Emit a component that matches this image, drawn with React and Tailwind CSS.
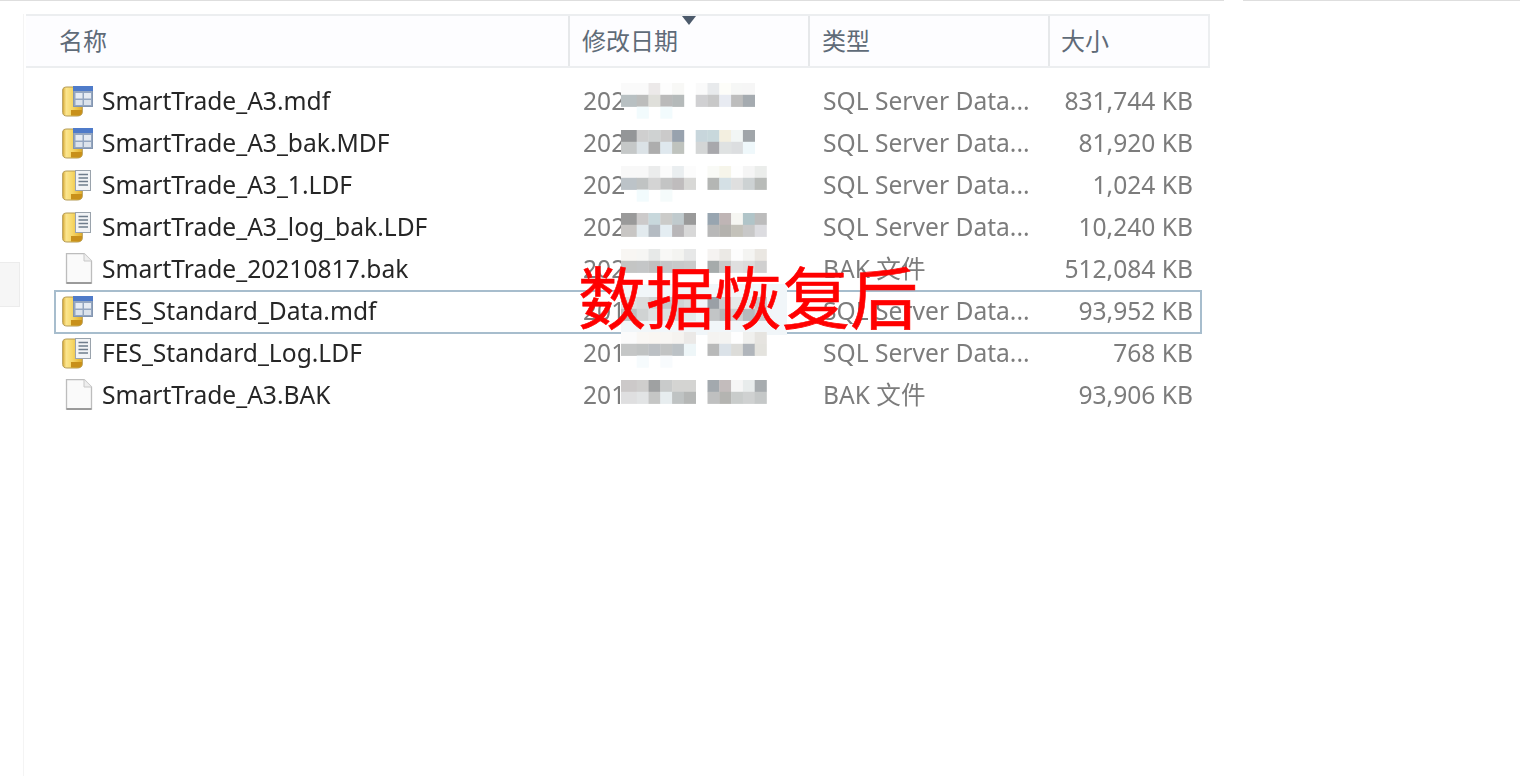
import React from "react";

const FONT = { fontFamily: '"Noto Sans", "Noto Sans CJK SC", sans-serif' };

const c = (s) => s.split(" ");
const mosaics = [
  { top: 83, rows: [c("fafafa fafafa ece9e9 fdfdfd f8f8f6 x fafafa e8eaec fdfdf9 f6f7f6 f6f6f6"), c("b8c0c2 bcbdbc dfdfda bababa b5baba x d0d0d2 c8c8c8 e8ebf2 bdbdbd a5abb0"), c("x f2fbfd x f2fbfd")] },
  { top: 130, rows: [c("949698 cfcfcf cfd2d2 cbcaca 98a2ae x c8d6dc c8d8dc f3efe0 f2f6f5 a0a5a9"), c("c5c8c8 dbe2e6 adadad dfe8ee bfc3be x d4d6d6 a8a8ac dfe2e2 dcdee0 eff8fb")] },
  { top: 166, rows: [c("f8f8f8 f8f8f8 ebecec fbfbfb eaeef0 fcfcfc x f9faf6 f6f5ea fefefe f5f5f5 ebedeb"), c("bcc3c8 c0c3c3 d4d4d4 c3c4c4 bfbcbd d8d8d6 x b4b6b4 d4e0e5 dfdfdf cdd2d3 b8bbb8"), c("x f2fbfd x f5fbfb")] },
  { top: 213, rows: [c("9a9a9a cccaca c8d8dc cbcbc9 c0cacd 9a9a9a x 98a5b0 bfb5b5 f6f6f2 b0c4c8 bcbcbc"), c("c8c6c4 e2eaee b4bbc2 e4edf2 b8b6b8 d8d8d8 x b8b8b8 b4b2ae c4c2ba c8c8c8 dcdce0")] },
  { top: 249, rows: [c("f8f6f3 f6f6f4 e7e9e8 f8f8f6 f4f4f1 e7e8e8 x f5f3f1 ebe9e5 fdfdfd f4f4f2 eae7e2"), c("c4c5c4 c4c6c7 c0c0c0 c5c6c8 c7c9c9 cacbca x a6abab c8c8c8 dfdfdf dbdbdb d0d0d0")] },
  { top: 297, rows: [c("dfe1e1 d9dbdb d0d2d2 c4c7c9 d0d2d4 d8dadb x 9aa0a6 c9cccd e6e8e8 e8ebec c5c8ca"), c("bcbfbf d0d3d3 dde1e1 dbdfe0 cfd3d5 e5eaec x c2c5c6 b4b7b8 cdd0d1 b5b9bc c8cbcc")] },
  { top: 332, rows: [c("fbfbfb f9f7f4 f9f6f2 f8f6f3 f5f3f0 ebe9e7 x f4f3f1 f4f4f2 fefefe f0f0ee e6e4e0"), c("c4c6c6 c0c3c3 bcc0c4 c2c4c4 bcc2c6 eef6f8 x b8b9b9 dbe2e8 dcdcd9 b0b5bb e4e3de"), c("x f6fbfd x f8fbfd")] },
  { top: 380, rows: [c("ccc9c9 cfcecd 9fa1a2 c9cbcb d4d4d2 d4d4d2 x a3a9ae c3bcbc f6f6f6 e8ecec a7acaf"), c("dfdfe0 e2e4e5 c5c6c5 e7edef bfc3c3 b5b7b6 x bfc0c0 b4b4b1 c9cccb cfd1d1 c5c8c8")] },
];

function Mosaic({ m }) {
  const cell = 11.8;
  const first = 15.7;
  return (
    <svg
      width="160"
      height="40"
      viewBox="0 0 160 40"
      className="absolute left-[621px] blur-[0.5px]"
      style={{ top: m.top }}
      aria-hidden="true"
    >
      {m.rows.map((row, y) =>
        row.map((col, x) => {
          if (col === "x") return null;
          const px = x === 0 ? 0 : first + (x - 1) * cell;
          return (
            <rect
              key={x + "-" + y}
              x={px}
              y={y * cell}
              width={(x === 0 ? first : cell) + 0.3}
              height={cell + 0.3}
              fill={"#" + col}
            />
          );
        })
      )}
    </svg>
  );
}

function Cylinder({ id }) {
  return (
    <>
      <defs>
        <linearGradient id={id} x1="0" x2="1" y1="0" y2="0">
          <stop offset="0" stopColor="#d9aa32" />
          <stop offset="0.18" stopColor="#fbe58f" />
          <stop offset="0.5" stopColor="#f6d766" />
          <stop offset="1" stopColor="#e0ac2a" />
        </linearGradient>
      </defs>
      <path
        d="M0.7 5 C0.7 2.5 3 2 5 2 H16 C19 2 20.3 3 20.3 5 V27 C20.3 30 18 31 15 31 H5 C2.5 31 0.7 30 0.7 27.5 Z"
        fill={`url(#${id})`}
        stroke="#b39a55"
      />
      <path d="M9 25 H20 V27 C20 29.5 18 30.6 15 30.6 H9 Z" fill="#c8901a" />
    </>
  );
}

function MdfIcon({ id }) {
  return (
    <svg width="32" height="32" viewBox="0 0 32 32" className="shrink-0" aria-hidden="true">
      <Cylinder id={id} />
      <rect x="11.5" y="1.5" width="19" height="20" fill="#94a6c0" stroke="#8496b0" />
      <rect x="11" y="1" width="20" height="5" fill="#4f7bc9" />
      <rect x="13.5" y="8" width="7" height="5.5" fill="#e6ebf2" />
      <rect x="22" y="8" width="7" height="5.5" fill="#e6ebf2" />
      <rect x="13.5" y="15" width="7" height="5" fill="#dce3ec" />
      <rect x="22" y="15" width="7" height="5" fill="#dce3ec" />
    </svg>
  );
}

function LdfIcon({ id }) {
  return (
    <svg width="32" height="32" viewBox="0 0 32 32" className="shrink-0" aria-hidden="true">
      <Cylinder id={id} />
      <rect x="13.5" y="1.5" width="15" height="20" fill="#f2f4f6" stroke="#9aa3ac" />
      <path d="M16.5 5.5 H26 M16.5 9 H26 M16.5 12.5 H26 M16.5 16 H26" stroke="#6f7d8c" strokeWidth="1.6" />
    </svg>
  );
}

function BlankIcon() {
  return (
    <svg width="32" height="32" viewBox="0 0 32 32" className="shrink-0" aria-hidden="true">
      <path d="M4.5 0.5 H22 L29.5 8 V30 H4.5 Z" fill="#fafafa" stroke="#bdbdbd" strokeWidth="1.3" />
      <path d="M22 0.5 V8 H29.5" fill="#eeeeee" stroke="#c8c8c8" />
      <path d="M4.5 30 H29.5" stroke="#8f8f8f" strokeWidth="1.6" />
    </svg>
  );
}

const files = [
  ["SmartTrade_A3.mdf", "202", "SQL Server Data...", "831,744 KB", "m"],
  ["SmartTrade_A3_bak.MDF", "202", "SQL Server Data...", "81,920 KB", "m"],
  ["SmartTrade_A3_1.LDF", "202", "SQL Server Data...", "1,024 KB", "l"],
  ["SmartTrade_A3_log_bak.LDF", "202", "SQL Server Data...", "10,240 KB", "l"],
  ["SmartTrade_20210817.bak", "202", "BAK 文件", "512,084 KB", "b"],
  ["FES_Standard_Data.mdf", "201", "SQL Server Data...", "93,952 KB", "m"],
  ["FES_Standard_Log.LDF", "201", "SQL Server Data...", "768 KB", "l"],
  ["SmartTrade_A3.BAK", "201", "BAK 文件", "93,906 KB", "b"],
];

export default function App() {
  return (
    <div className="relative h-[776px] w-[1520px] overflow-hidden bg-white" style={FONT}>
      <div className="flex h-px gap-[19px]">
        <div className="w-[1224px] bg-[#dedede]" />
        <div className="flex-1 bg-[#dedede]" />
      </div>
      <div className="absolute left-0 top-[262px] h-[45px] w-[20px] border border-l-0 border-[#ececec] bg-[#f6f6f6]" />

      <div className="ml-[23px] mt-[13px] h-[762px] border-l border-[#f4f4f4] pl-[2px] blur-[0.6px]">
        <div className="flex h-[54px] w-[1184px] border-y-2 border-r-2 border-[#eceef0] bg-[#fdfdff] text-[24px] leading-[50px] text-[#5f6b78]">
          <div className="w-[544px] border-r-2 border-[#e6e8ea] pl-[33px]">名称</div>
          <div className="relative w-[240px] border-r-2 border-[#e6e8ea] pl-[12px]">
            修改日期
            <span className="absolute left-[112px] top-0 h-0 w-0 border-x-[7px] border-t-[9px] border-x-transparent border-t-[#4c5a6b]" />
          </div>
          <div className="w-[240px] border-r-2 border-[#e6e8ea] pl-[12px]">类型</div>
          <div className="flex-1 pl-[11px]">大小</div>
        </div>

        <div className="mt-[12px] flex w-[1176px] flex-col text-[24.6px] leading-[38px]">
          {files.map(([name, date, type, size, kind], i) => (
            <div
              key={name}
              className={
                i === 5
                  ? "z-0 -mb-[2px] ml-[28px] flex h-[44px] w-[1148px] items-center border-2 border-[#a7bdcd] pb-[2px] text-[#7c7c7c]"
                  : "ml-[28px] flex h-[42px] w-[1148px] items-center border-2 border-transparent text-[#7c7c7c]"
              }
            >
              <div className="flex w-[514px] shrink-0 items-center gap-[8px] pl-[6px] text-[#262626]">
                {kind === "m" ? <MdfIcon id={"g" + i} /> : kind === "l" ? <LdfIcon id={"g" + i} /> : <BlankIcon />}
                <span>{name}</span>
              </div>
              <div className="w-[240px] shrink-0 pl-[13px]">{date}</div>
              <div className="w-[235px] shrink-0 pl-[13px]">{type}</div>
              <div className="flex-1 pr-[7px] text-right">{size}</div>
            </div>
          ))}
        </div>
      </div>

      <div className="absolute left-[621px] top-[284px] h-[51px] w-[166px] bg-[#f1f6f9]" />

      {mosaics.map((m, i) => (
        <Mosaic key={i} m={m} />
      ))}

      <div
        className="absolute left-[578px] top-[255px] text-[68px] leading-[80px] text-[#ff0000] [-webkit-text-stroke:0.6px_#ff0000]"
        style={{ fontFamily: '"Noto Sans CJK SC", sans-serif' }}
      >
        数据恢复后
      </div>
    </div>
  );
}
